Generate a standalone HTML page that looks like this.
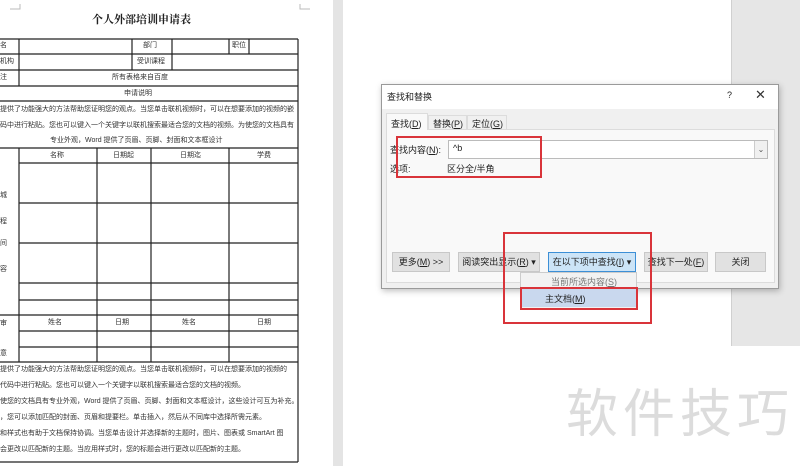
<!DOCTYPE html>
<html><head><meta charset="utf-8"><style>
*{margin:0;padding:0;box-sizing:border-box}
body{width:800px;height:466px;overflow:hidden;background:#fff;position:relative;font-family:"Liberation Sans","Noto Sans CJK SC",sans-serif;color:#222}
.a{position:absolute;white-space:nowrap}
.t{font-size:7px;color:#333;line-height:8px}
.c{text-align:center}
.d{font-size:9px;color:#222}
.btn{position:absolute;top:252px;height:20px;background:#e1e1e1;border:1px solid #c8c8c8;font-size:9px;line-height:18px;text-align:center;color:#222}
.red{position:absolute;border:2px solid #d9343a}
</style></head><body>
<div class="a" style="left:333px;top:0;width:10px;height:466px;background:#e4e4e4"></div>
<div class="a" style="left:731px;top:0;width:69px;height:346px;background:#e6e6e6;border-left:1px solid #d0d0d0"></div>
<div class="a" style="left:566px;top:372px;font-size:52px;color:#dcdcdc;letter-spacing:5px;font-family:'Noto Sans CJK SC',sans-serif">软件技巧</div>

<div class="a" style="left:92px;top:11px;font-size:11px;font-weight:bold;font-family:'Noto Serif CJK SC',serif">个人外部培训申请表</div>
<svg class="a" style="left:0;top:0" width="333" height="466">
<g stroke="#222" stroke-width="1.2" fill="none">
<line x1="0" y1="39" x2="298" y2="39"/><line x1="0" y1="54" x2="298" y2="54"/><line x1="0" y1="70" x2="298" y2="70"/><line x1="0" y1="86" x2="298" y2="86"/><line x1="0" y1="101" x2="298" y2="101"/><line x1="0" y1="148" x2="298" y2="148"/>
<line x1="19" y1="163" x2="298" y2="163"/><line x1="19" y1="203" x2="298" y2="203"/><line x1="19" y1="243" x2="298" y2="243"/><line x1="19" y1="283" x2="298" y2="283"/><line x1="19" y1="300" x2="298" y2="300"/>
<line x1="0" y1="315" x2="298" y2="315"/><line x1="19" y1="331" x2="298" y2="331"/><line x1="19" y1="347" x2="298" y2="347"/><line x1="0" y1="362" x2="298" y2="362"/><line x1="0" y1="462" x2="298" y2="462"/>
<line x1="298" y1="39" x2="298" y2="462"/>
<line x1="19" y1="39" x2="19" y2="86"/><line x1="132" y1="39" x2="132" y2="70"/><line x1="172" y1="39" x2="172" y2="70"/><line x1="229" y1="39" x2="229" y2="54"/><line x1="249" y1="39" x2="249" y2="54"/>
<line x1="19" y1="148" x2="19" y2="362"/><line x1="97" y1="148" x2="97" y2="362"/><line x1="151" y1="148" x2="151" y2="362"/><line x1="229" y1="148" x2="229" y2="362"/>
</g>
<g stroke="#bbb" stroke-width="1" fill="none"><path d="M300 4v5h10M20 4v5h-10M378 4v5h10"/></g>
</svg>
<div class="a t" style="left:0;top:42px">名</div>
<div class="a t" style="left:0;top:58px">机构</div>
<div class="a t" style="left:0;top:74px">注</div>
<div class="a t" style="left:143px;top:42px">部门</div>
<div class="a t" style="left:232px;top:42px">职位</div>
<div class="a t" style="left:137px;top:58px">受训课程</div>
<div class="a t" style="left:112px;top:74px">所有表格来自百度</div>
<div class="a t" style="left:124px;top:90px">申请说明</div>
<div class="a t" style="left:0;top:106px">提供了功能强大的方法帮助您证明您的观点。当您单击联机视频时，可以在想要添加的视频的嵌</div>
<div class="a t" style="left:0;top:122px">码中进行粘贴。您也可以键入一个关键字以联机搜索最适合您的文档的视频。为使您的文档具有</div>
<div class="a t" style="left:50px;top:137px">专业外观，Word 提供了页眉、页脚、封面和文本框设计</div>
<div class="a t" style="left:50px;top:152px">名称</div>
<div class="a t" style="left:113px;top:152px">日期起</div>
<div class="a t" style="left:180px;top:152px">日期迄</div>
<div class="a t" style="left:257px;top:152px">学费</div>
<div class="a t" style="left:0;top:192px">城</div>
<div class="a t" style="left:0;top:218px">程</div>
<div class="a t" style="left:0;top:240px">间</div>
<div class="a t" style="left:0;top:266px">容</div>
<div class="a t" style="left:0;top:320px">审</div>
<div class="a t" style="left:0;top:350px">意</div>
<div class="a t" style="left:48px;top:319px">姓名</div>
<div class="a t" style="left:115px;top:319px">日期</div>
<div class="a t" style="left:182px;top:319px">姓名</div>
<div class="a t" style="left:257px;top:319px">日期</div>
<div class="a t" style="left:0;top:366px">提供了功能强大的方法帮助您证明您的观点。当您单击联机视频时，可以在想要添加的视频的</div>
<div class="a t" style="left:0;top:382px">代码中进行粘贴。您也可以键入一个关键字以联机搜索最适合您的文档的视频。</div>
<div class="a t" style="left:0;top:398px">使您的文档具有专业外观，Word 提供了页眉、页脚、封面和文本框设计，这些设计可互为补充。</div>
<div class="a t" style="left:0;top:414px">，您可以添加匹配的封面、页眉和提要栏。单击插入，然后从不同库中选择所需元素。</div>
<div class="a t" style="left:0;top:430px">和样式也有助于文档保持协调。当您单击设计并选择新的主题时，图片、图表或 SmartArt 图</div>
<div class="a t" style="left:0;top:446px">会更改以匹配新的主题。当应用样式时，您的标题会进行更改以匹配新的主题。</div>

<div class="a" style="left:381px;top:84px;width:398px;height:205px;background:#f0f0f0;border:1px solid #9a9a9a;box-shadow:1px 2px 6px rgba(0,0,0,.25)">
<div class="a" style="left:0;top:0;width:396px;height:24px;background:#fff"></div>
<div class="a d" style="left:5px;top:5px">查找和替换</div>
<div class="a d" style="left:345px;top:5px">?</div>
<div class="a" style="left:373px;top:2px;font-size:13px;color:#333">✕</div>
<div class="a" style="left:4px;top:44px;width:389px;height:154px;background:#f9f9f9;border:1px solid #dcdcdc"></div>
<div class="a" style="left:4px;top:28px;width:42px;height:17px;background:#f9f9f9;border:1px solid #dcdcdc;border-bottom:none"></div>
<div class="a" style="left:46px;top:30px;width:39px;height:14px;border:1px solid #dcdcdc;border-bottom:none"></div>
<div class="a" style="left:85px;top:30px;width:40px;height:14px;border:1px solid #dcdcdc;border-bottom:none"></div>
<div class="a d" style="left:9px;top:32px">查找(<u>D</u>)</div>
<div class="a d" style="left:51px;top:32px">替换(<u>P</u>)</div>
<div class="a d" style="left:90px;top:32px">定位(<u>G</u>)</div>
<div class="a d" style="left:8px;top:58px">查找内容(<u>N</u>):</div>
<div class="a" style="left:66px;top:55px;width:320px;height:19px;background:#fff;border:1px solid #bbb"></div>
<div class="a d" style="left:71px;top:58px">^b</div>
<div class="a" style="left:372px;top:56px;width:13px;height:17px;background:#f0f0f0;border-left:1px solid #ccc;font-size:8px;color:#555;text-align:center;line-height:17px">⌄</div>
<div class="a d" style="left:8px;top:77px">选项:</div>
<div class="a d" style="left:65px;top:77px">区分全/半角</div>
</div>
<div class="btn" style="left:392px;width:58px">更多(<u>M</u>) &gt;&gt;</div>
<div class="btn" style="left:458px;width:82px">阅读突出显示(<u>R</u>) ▾</div>
<div class="btn" style="left:548px;width:88px;background:#cce4f7;border-color:#3c8fd6">在以下项中查找(<u>I</u>) ▾</div>
<div class="btn" style="left:644px;width:64px">查找下一处(<u>F</u>)</div>
<div class="btn" style="left:715px;width:51px">关闭</div>
<div class="a" style="left:520px;top:272px;width:117px;height:37px;background:#f2f2f2;border:1px solid #ccc"></div>
<div class="a d" style="left:551px;top:275px;color:#777">当前所选内容(<u>S</u>)</div>
<div class="a" style="left:522px;top:288px;width:114px;height:19px;background:#c9d8ee"></div>
<div class="a d" style="left:545px;top:292px">主文档(<u>M</u>)</div>
<div class="red" style="left:396px;top:136px;width:146px;height:42px"></div>
<div class="red" style="left:503px;top:232px;width:149px;height:92px"></div>
<div class="red" style="left:520px;top:287px;width:118px;height:23px"></div>
</body></html>
